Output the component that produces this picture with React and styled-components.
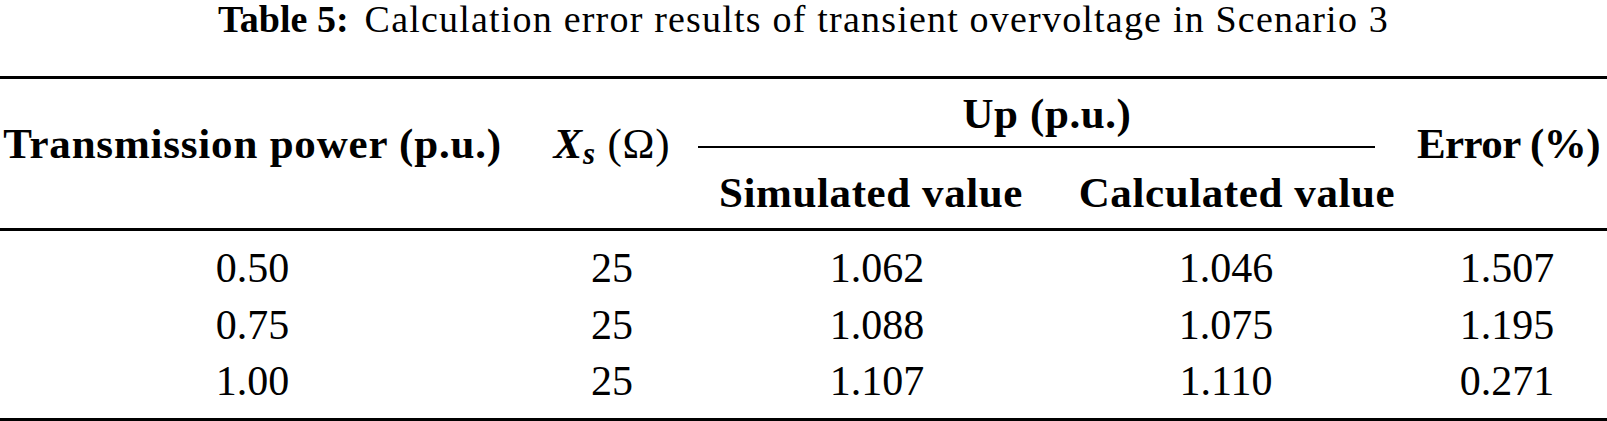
import React from 'react';
import styled, { createGlobalStyle } from 'styled-components';

const rows = [
  { power: '0.50', xs: '25', simulated: '1.062', calculated: '1.046', error: '1.507' },
  { power: '0.75', xs: '25', simulated: '1.088', calculated: '1.075', error: '1.195' },
  { power: '1.00', xs: '25', simulated: '1.107', calculated: '1.110', error: '0.271' },
];

function App() {
  return (
    <Page>
      <GlobalStyle />
      <Caption>
        <CaptionLabel>Table 5:</CaptionLabel>
        Calculation error results of transient overvoltage in Scenario 3
      </Caption>
      <Table>
        <colgroup>
          <col style={{ width: 505 }} />
          <col style={{ width: 214 }} />
          <col style={{ width: 316 }} />
          <col style={{ width: 382 }} />
          <col style={{ width: 190 }} />
        </colgroup>
        <thead>
          <tr>
            <SpanHead rowSpan={2}>Transmission power (p.u.)</SpanHead>
            <SpanHead rowSpan={2}>
              <Variable>
                X<Sub>s</Sub>
              </Variable>
              <Unit> (Ω)</Unit>
            </SpanHead>
            <GroupHead colSpan={2}>
              <GroupLabel>Up (p.u.)</GroupLabel>
              <GroupRule />
            </GroupHead>
            <SpanHead rowSpan={2} $last>
              Error (%)
            </SpanHead>
          </tr>
          <tr>
            <SubHead $shift={-13}>Simulated value</SubHead>
            <SubHead $shift={22}>Calculated value</SubHead>
          </tr>
        </thead>
        <tbody>
          {rows.map((row, i) => (
            <Row key={row.power} $first={i === 0} $end={i === rows.length - 1}>
              <Cell>{row.power}</Cell>
              <Cell>{row.xs}</Cell>
              <Cell>{row.simulated}</Cell>
              <Cell>{row.calculated}</Cell>
              <Cell $last>{row.error}</Cell>
            </Row>
          ))}
        </tbody>
      </Table>
    </Page>
  );
}

const GlobalStyle = createGlobalStyle`
  html, body {
    margin: 0;
    padding: 0;
    background: #fff;
  }

  body {
    font-family: 'Liberation Serif', 'Times New Roman', serif;
    color: #000;
  }
`;

const Page = styled.div`
  width: 1607px;
`;

const Caption = styled.div`
  text-align: center;
  font-size: 38px;
  line-height: 38px;
  letter-spacing: 1.2px;
  white-space: nowrap;
  margin-bottom: 38px;
`;

const CaptionLabel = styled.span`
  font-weight: bold;
  letter-spacing: 0;
  margin-right: 16px;
`;

const Table = styled.table`
  width: 1607px;
  table-layout: fixed;
  border-collapse: separate;
  border-spacing: 0;
  border-top: 3px solid #000;
  border-bottom: 3px solid #000;
`;

const HeadBase = styled.th`
  font-size: 43px;
  line-height: 43px;
  font-weight: bold;
  letter-spacing: 0.6px;
  text-align: center;
  white-space: nowrap;
  padding: 0;
`;

const SpanHead = styled(HeadBase)`
  vertical-align: top;
  padding-top: 43px;
  padding-right: ${p => (p.$last ? '10px' : '0')};
  letter-spacing: ${p => (p.$last ? '-0.6px' : '0.8px')};
`;

const GroupHead = styled(HeadBase)`
  vertical-align: bottom;
  padding-top: 13px;
`;

const GroupLabel = styled.div`
  padding-right: 42px;
`;

const GroupRule = styled.div`
  margin: 11px 42px 0 -21px;
  border-top: 2px solid #000;
`;

const SubHead = styled(HeadBase)`
  padding-top: 23px;
  padding-bottom: 14px;
  padding-left: ${p => (p.$shift > 0 ? p.$shift : 0)}px;
  padding-right: ${p => (p.$shift < 0 ? -p.$shift : 0)}px;
`;

const Variable = styled.span`
  font-style: italic;
`;

const Sub = styled.span`
  font-size: 0.72em;
  position: relative;
  top: 0.2em;
`;

const Unit = styled.span`
  font-weight: normal;
`;

const Row = styled.tr`
  & > td {
    padding-top: ${p => (p.$first ? '9px' : '0')};
    padding-bottom: ${p => (p.$end ? '8px' : '0')};
    border-top: ${p => (p.$first ? '3px solid #000' : 'none')};
  }
`;

const Cell = styled.td`
  font-size: 42px;
  line-height: 56.5px;
  text-align: center;
  white-space: nowrap;
  padding-left: 0;
  padding-right: ${p => (p.$last ? '10px' : '0')};
`;

export default App;
